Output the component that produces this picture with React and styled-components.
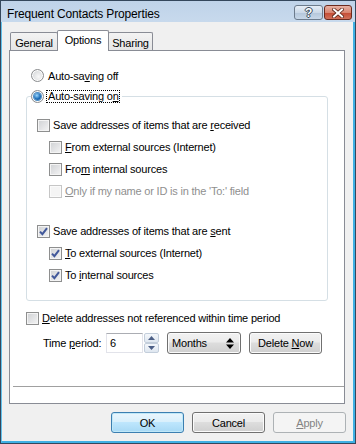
import styled, { createGlobalStyle, css } from "styled-components"

const GlobalStyle = createGlobalStyle`
html, body {
    margin: 0;
    padding: 0;
}
body {
    width: 356px;
    height: 444px;
    overflow: hidden;
    font-family: "Liberation Sans", Arial, sans-serif;
    font-size: 11px;
    letter-spacing: -0.2px;
    color: #000;
    background: #fff;
}
`

export default function App() {
    return (
        <>
            <GlobalStyle />
            <Window>
                <TitleBar>
                    <Caption>Frequent Contacts Properties</Caption>
                    <CaptionButtons>
                        <HelpButton>?</HelpButton>
                        <CloseButton>
                            <svg width="12" height="10" viewBox="0 0 12 10">
                                <path d="M2 1.5 L10 8.5 M10 1.5 L2 8.5" stroke="#5a2418" strokeWidth="3.6" strokeLinecap="square" />
                                <path d="M2 1.5 L10 8.5 M10 1.5 L2 8.5" stroke="#fff" strokeWidth="2" strokeLinecap="square" />
                            </svg>
                        </CloseButton>
                    </CaptionButtons>
                </TitleBar>
                <Client>
                    <TabRow>
                        <Tab $w={48}>General</Tab>
                        <Tab $w={52} $active>Options</Tab>
                        <Tab $w={45}>Sharing</Tab>
                    </TabRow>
                    <Panel>
                        <Content>
                            <RadioRow>
                                <Radio />
                                <span>Auto-sa<u>v</u>ing off</span>
                            </RadioRow>
                            <Group>
                                <Legend>
                                    <Radio $on />
                                    <Focus>Auto-saving o<u>n</u></Focus>
                                </Legend>
                                <GroupBody>
                                    <Check label={<>Save addresses of items that are <u>r</u>eceived</>} />
                                    <Check $level={1} label={<><u>F</u>rom external sources (Internet)</>} />
                                    <Check $level={1} label={<>Fro<u>m</u> internal sources</>} />
                                    <Check $level={1} disabled label={<><u>O</u>nly if my name or ID is in the 'To:' field</>} />
                                    <Spacer />
                                    <Check checked label={<>Save addresses of items that are <u>s</u>ent</>} />
                                    <Check $level={1} checked label={<><u>T</u>o external sources (Internet)</>} />
                                    <Check $level={1} checked label={<>To <u>i</u>nternal sources</>} />
                                </GroupBody>
                            </Group>
                            <DeleteRow>
                                <Check label={<><u>D</u>elete addresses not referenced within time period</>} />
                            </DeleteRow>
                            <PeriodRow>
                                <PeriodLabel>Time <u>p</u>eriod:</PeriodLabel>
                                <NumberBox>6</NumberBox>
                                <Spinner>
                                    <SpinButton>
                                        <svg width="7" height="4" viewBox="0 0 7 4"><path d="M0 4 L3.5 0 L7 4Z" fill="#4c5f86" /></svg>
                                    </SpinButton>
                                    <SpinButton>
                                        <svg width="7" height="4" viewBox="0 0 7 4"><path d="M0 0 L3.5 4 L7 0Z" fill="#4c5f86" /></svg>
                                    </SpinButton>
                                </Spinner>
                                <Select>
                                    <span>Months</span>
                                    <svg width="8" height="11" viewBox="0 0 8 11">
                                        <path d="M0 4.5 L4 0 L8 4.5Z M0 6.5 L4 11 L8 6.5Z" fill="#000" />
                                    </svg>
                                </Select>
                                <Button $w={73}>Delete <u>N</u>ow</Button>
                            </PeriodRow>
                        </Content>
                        <Separator />
                    </Panel>
                    <ButtonRow>
                        <Button $default>OK</Button>
                        <Button>Cancel</Button>
                        <Button disabled><u>A</u>pply</Button>
                    </ButtonRow>
                </Client>
            </Window>
        </>
    )
}

function Check({ label, checked, disabled, $level }) {
    return (
        <CheckRow $level={$level} $disabled={disabled}>
            <Box $disabled={disabled}>
                {checked && (
                    <svg width="9" height="9" viewBox="0 0 9 9">
                        <path d="M1 4.6 L3.4 7.2 L8 1.2" stroke="#41589a" strokeWidth="2" fill="none" />
                    </svg>
                )}
            </Box>
            <span>{label}</span>
        </CheckRow>
    )
}

const Window = styled.div`
width: 356px;
height: 444px;
box-sizing: border-box;
border: 1px solid #34475c;
background: linear-gradient(#bfd3e9, #cbdcee 30px);
display: flex;
flex-direction: column;
`

const TitleBar = styled.div`
height: 21px;
display: flex;
justify-content: space-between;
padding: 0 3px 0 6px;
`

const Caption = styled.div`
font-size: 12px;
line-height: 12px;
letter-spacing: -0.15px;
padding-top: 7px;
color: #000;
`

const CaptionButtons = styled.div`
display: flex;
gap: 1px;
padding-top: 4px;
`

const captionButton = css`
height: 15px;
box-sizing: border-box;
border-radius: 3px;
display: flex;
align-items: center;
justify-content: center;
`

const HelpButton = styled.div`
${captionButton}
width: 29px;
border: 1px solid #6c7b8c;
background: linear-gradient(#e6eef7, #cbd9e8 50%, #b4c6da 51%, #c7d7e8);
color: #fff;
font-weight: bold;
font-size: 12px;
text-shadow: 0 0 1px #3b4a5c, 1px 0 0 #3b4a5c, -1px 0 0 #3b4a5c, 0 1px 0 #3b4a5c, 0 -1px 0 #3b4a5c;
`

const CloseButton = styled.div`
${captionButton}
width: 28px;
border: 1px solid #6b2a1e;
background: linear-gradient(#e7b2a5, #d98672 50%, #c44a33 51%, #d0705a);
`

const Client = styled.div`
flex: 1;
display: flex;
flex-direction: column;
background: #f0f0f0;
border-left: 1px solid #62c2ec;
border-right: 2px solid #3fb0e4;
border-bottom: 2px solid #3fb0e4;
padding: 8px 8px 8px 7px;
`

const TabRow = styled.div`
height: 20px;
display: flex;
align-items: flex-end;
padding-left: 2px;
`

const Tab = styled.div`
width: ${p => p.$w}px;
height: ${p => (p.$active ? 21 : 18)}px;
box-sizing: border-box;
margin-left: -1px;
border: 1px solid #898c95;
border-bottom: none;
border-radius: 2px 2px 0 0;
background: ${p => (p.$active ? "#fff" : "linear-gradient(#f3f3f3, #e6e6e6)")};
margin-bottom: ${p => (p.$active ? -1 : 0)}px;
position: relative;
z-index: ${p => (p.$active ? 1 : 0)};
display: flex;
justify-content: center;
padding-top: ${p => (p.$active ? 3 : 4)}px;
font-size: 11px;
`

const Panel = styled.div`
flex: 1;
display: flex;
flex-direction: column;
background: #fff;
border: 1px solid #898c95;
padding: 18px 0 16px 3px;
`

const Content = styled.div`
padding: 0 16px 0 13px;
`

const RadioRow = styled.div`
height: 13px;
display: flex;
align-items: center;
gap: 4px;
padding-left: 5px;
`

const Radio = styled.span`
width: 13px;
height: 13px;
box-sizing: border-box;
border-radius: 50%;
border: 1px solid #8a8c8e;
background: radial-gradient(circle at 60% 60%, #f8f8f8, #d8dadc 70%);
box-shadow: inset 0 0 0 1px #fdfdfd;
flex-shrink: 0;
display: flex;
align-items: center;
justify-content: center;
&::after {
    content: "";
    display: ${p => (p.$on ? "block" : "none")};
    width: 7px;
    height: 7px;
    border-radius: 50%;
    background: radial-gradient(circle at 40% 35%, #9ad7ff, #1f6fb8 55%, #0f4c8e);
    box-shadow: 0 0 0 1px #4d8fc7;
}
`

const Group = styled.fieldset`
margin: 8px 0 0;
padding: 0 0 14px;
min-width: 0;
border: 1px solid #d5dfe5;
border-radius: 3px;
`

const Legend = styled.legend`
margin-left: 4px;
padding: 0 2px 0 0;
height: 13px;
display: flex;
align-items: center;
gap: 2px;
`

const Focus = styled.span`
border: 1px dotted #000;
padding: 0 0 0 1px;
line-height: 11px;
`

const GroupBody = styled.div`
padding: 11px 0 0 10px;
`

const CheckRow = styled.div`
height: 22px;
display: flex;
align-items: center;
gap: 3px;
margin-left: ${p => (p.$level ? 12 : 0)}px;
color: ${p => (p.$disabled ? "#8f8f8f" : "#000")};
`

const Box = styled.span`
width: 13px;
height: 13px;
box-sizing: border-box;
flex-shrink: 0;
border: 1px solid ${p => (p.$disabled ? "#c6c6c6" : "#8e8f8f")};
background: ${p => (p.$disabled ? "#f4f4f4" : "linear-gradient(135deg, #cfd1d4, #f4f4f5)")};
box-shadow: inset 0 0 0 1px ${p => (p.$disabled ? "#fafafa" : "#f4f4f4")};
display: flex;
align-items: center;
justify-content: center;
`

const Spacer = styled.div`
height: 18px;
`

const DeleteRow = styled.div`
margin-top: 6px;
`

const PeriodRow = styled.div`
margin-top: 3px;
height: 22px;
display: flex;
align-items: center;
padding-left: 17px;
`

const PeriodLabel = styled.span`
width: 63px;
`

const NumberBox = styled.div`
width: 37px;
height: 20px;
box-sizing: border-box;
border: 1px solid #e2e3ea;
border-top-color: #abadb3;
background: #fff;
padding: 3px 0 0 3px;
`

const Spinner = styled.div`
margin-left: 1px;
display: flex;
flex-direction: column;
`

const SpinButton = styled.div`
width: 15px;
height: 10px;
box-sizing: border-box;
border: 1px solid #c3cedb;
border-radius: 2px;
background: linear-gradient(#f4f7fb, #dfe7f0);
display: flex;
align-items: center;
justify-content: center;
`

const buttonFace = css`
box-sizing: border-box;
height: 22px;
border: 1px solid #707070;
border-radius: 3px;
background: linear-gradient(#f2f2f2, #ebebeb 45%, #dddddd 50%, #cfcfcf);
box-shadow: inset 0 0 0 1px #fbfbfb;
font-family: inherit;
font-size: 11px;
letter-spacing: -0.2px;
color: #000;
`

const Select = styled.div`
${buttonFace}
width: 74px;
margin-left: 8px;
display: flex;
align-items: center;
justify-content: space-between;
padding: 0 6px 0 4px;
`

const Button = styled.button`
${buttonFace}
width: ${p => p.$w || 73}px;
height: ${p => (p.$w ? 22 : 21)}px;
margin-left: 8px;
padding: 0;
${p => p.$default && css`
    border-color: #3c7fb1;
    background: linear-gradient(#eaf6fd, #d9f0fc 45%, #bee6fd 50%, #a7d9f5);
    box-shadow: inset 0 0 0 1px #c0e8f8;
`}
${p => p.disabled && css`
    border-color: #adb2b5;
    background: #f4f4f4;
    box-shadow: none;
    color: #838383;
`}
`

const Separator = styled.div`
margin-top: auto;
height: 1px;
background: #a0a0a0;
`

const ButtonRow = styled.div`
margin-top: 8px;
margin-right: -1px;
display: flex;
justify-content: flex-end;
`
